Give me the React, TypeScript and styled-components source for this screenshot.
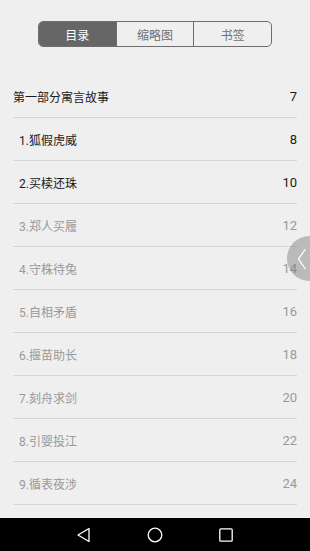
import React from 'react';
import styled, { createGlobalStyle } from 'styled-components';

const GlobalStyle = createGlobalStyle`
  html, body {
    margin: 0;
    padding: 0;
    background: #efefef;
  }
  * {
    box-sizing: border-box;
  }
`;

const Screen = styled.div`
  position: relative;
  width: 310px;
  height: 551px;
  display: flex;
  flex-direction: column;
  overflow: hidden;
  background: #efefef;
  font-family: Roboto, "Noto Sans CJK SC", sans-serif;
`;

const Content = styled.div`
  flex: 1;
  min-height: 0;
  overflow: hidden;
  display: flex;
  flex-direction: column;
  align-items: center;
  padding-top: 21px;
`;

const Tabs = styled.div`
  flex-shrink: 0;
  display: flex;
  width: 234px;
  height: 26px;
  border: 1px solid #6e6e6e;
  border-radius: 5px;
  overflow: hidden;
`;

const Tab = styled.div<{ $active?: boolean }>`
  flex: 1;
  display: flex;
  align-items: center;
  justify-content: center;
  font-size: 12px;
  color: ${p => (p.$active ? '#ffffff' : '#707070')};
  background: ${p => (p.$active ? '#666666' : 'transparent')};
  & + & {
    border-left: 1px solid #6e6e6e;
  }
`;

const List = styled.div`
  flex-shrink: 0;
  width: 284px;
  margin-top: 28px;
  display: flex;
  flex-direction: column;
`;

const Row = styled.div<{ $indent?: boolean; $dim?: boolean }>`
  flex-shrink: 0;
  height: 43px;
  display: flex;
  align-items: center;
  justify-content: space-between;
  padding-left: ${p => (p.$indent ? '6px' : '0')};
  border-bottom: 1px solid #d6d6d6;
  font-size: 12px;
  color: ${p => (p.$dim ? '#999999' : '#1a1a1a')};
`;

const PageNum = styled.span`
  font-size: 13px;
`;

const SideHandle = styled.div`
  position: absolute;
  left: 287px;
  top: 236px;
  width: 45px;
  height: 45px;
  border-radius: 50%;
  background: rgba(123, 123, 123, 0.45);
  display: flex;
  align-items: center;
  padding-left: 10px;
`;

const NavBar = styled.div`
  height: 33px;
  flex-shrink: 0;
  background: #000000;
  display: flex;
  align-items: center;
  justify-content: center;
  gap: 55px;
`;

const NavIcon = styled.svg`
  width: 16px;
  height: 16px;
  display: block;
`;

const chapters = [
  { title: '1.狐假虎威', page: 8, dim: false },
  { title: '2.买椟还珠', page: 10, dim: false },
  { title: '3.郑人买履', page: 12, dim: true },
  { title: '4.守株待兔', page: 14, dim: true },
  { title: '5.自相矛盾', page: 16, dim: true },
  { title: '6.揠苗助长', page: 18, dim: true },
  { title: '7.刻舟求剑', page: 20, dim: true },
  { title: '8.引婴投江', page: 22, dim: true },
  { title: '9.循表夜涉', page: 24, dim: true },
];

const App = () => {
  return (
    <Screen>
      <GlobalStyle />
      <Content>
        <Tabs>
          <Tab $active>目录</Tab>
          <Tab>缩略图</Tab>
          <Tab>书签</Tab>
        </Tabs>
        <List>
          <Row>
            <span>第一部分寓言故事</span>
            <PageNum>7</PageNum>
          </Row>
          {chapters.map(c => (
            <Row key={c.title} $indent $dim={c.dim}>
              <span>{c.title}</span>
              <PageNum>{c.page}</PageNum>
            </Row>
          ))}
        </List>
      </Content>
      <SideHandle>
        <svg width="10" height="22" viewBox="0 0 10 22">
          <polyline points="8.5,1 1.5,11 8.5,21" fill="none" stroke="#ffffff" strokeWidth="1.3" />
        </svg>
      </SideHandle>
      <NavBar>
        <NavIcon viewBox="0 0 16 16">
          <polygon points="13,1.5 13,14.5 2,8" fill="none" stroke="#ffffff" strokeWidth="1.3" strokeLinejoin="round" />
        </NavIcon>
        <NavIcon viewBox="0 0 16 16">
          <circle cx="8" cy="8" r="6.8" fill="none" stroke="#ffffff" strokeWidth="1.3" />
        </NavIcon>
        <NavIcon viewBox="0 0 16 16">
          <rect x="1.8" y="1.8" width="12.4" height="12.4" rx="1" fill="none" stroke="#ffffff" strokeWidth="1.3" />
        </NavIcon>
      </NavBar>
    </Screen>
  );
};

export default App;
